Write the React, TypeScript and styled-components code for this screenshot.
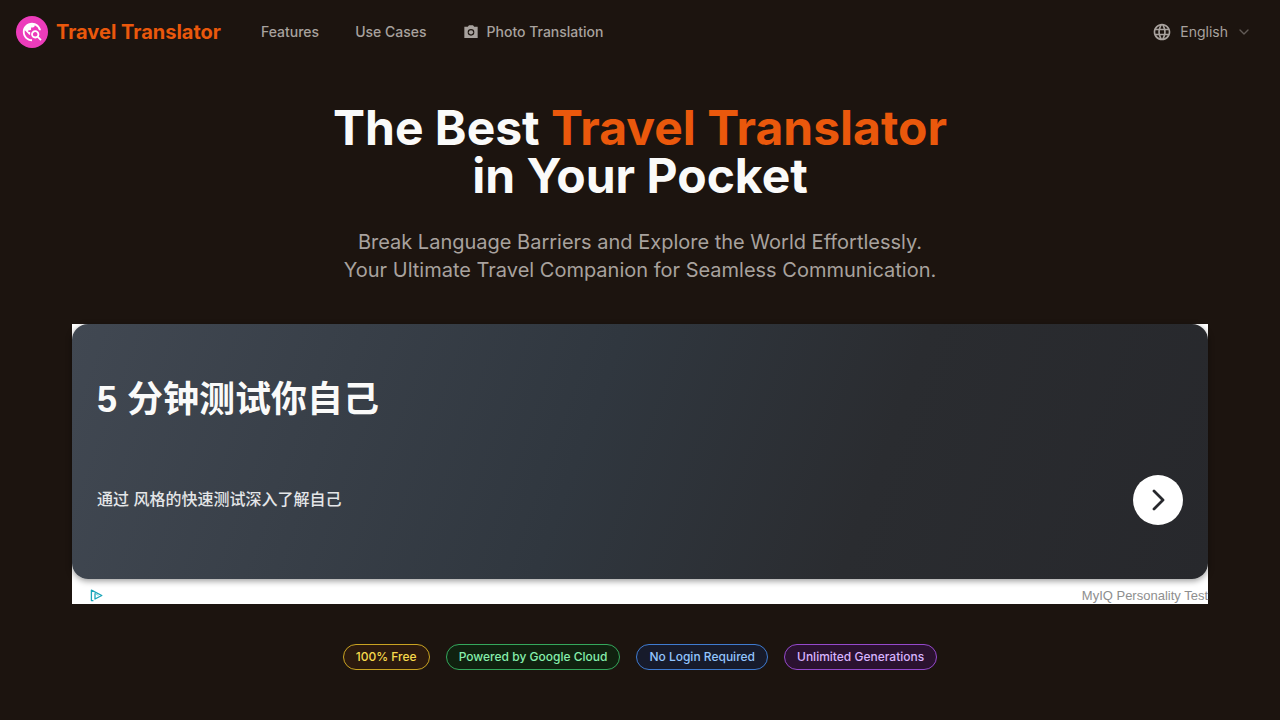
import React from "react";
import styled, { createGlobalStyle } from "styled-components";
import { MdTravelExplore, MdLanguage } from "react-icons/md";
import { ChevronDown } from "lucide-react";

const GlobalStyle = createGlobalStyle`
  *, *::before, *::after { box-sizing: border-box; }
  body {
    margin: 0;
    background: #1c140f;
    color: #fafaf9;
    font-family: Inter, "Noto Sans CJK SC", sans-serif;
  }
  h1, h2, p, ul { margin: 0; padding: 0; }
`;

const Header = styled.header`
  display: flex;
  align-items: center;
  justify-content: space-between;
  height: 64px;
  padding: 0 16px;
`;

const HeaderGroup = styled.div`
  display: flex;
  align-items: center;
  gap: 24px;
`;

const Brand = styled.a`
  display: flex;
  align-items: center;
  gap: 8px;
  color: #ea580c;
  font-size: 20px;
  font-weight: 700;
  line-height: 28px;
  text-decoration: none;
`;

const BrandMark = styled.span`
  display: flex;
  align-items: center;
  justify-content: center;
  width: 32px;
  height: 32px;
  border-radius: 50%;
  background: #ec3cbb;
  color: #ffffff;
`;

const Nav = styled.nav`
  display: flex;
  align-items: center;
  gap: 4px;
`;

const NavLink = styled.a`
  display: flex;
  align-items: center;
  gap: 8px;
  padding: 8px 16px;
  color: #a8a29e;
  font-size: 14px;
  font-weight: 500;
  line-height: 20px;
  text-decoration: none;
`;

const LanguageButton = styled.button`
  display: flex;
  align-items: center;
  gap: 8px;
  padding: 8px 12px;
  border: 0;
  background: transparent;
  color: #a8a29e;
  font-family: inherit;
  font-size: 14px;
  line-height: 20px;
  cursor: pointer;

  svg:last-child { opacity: 0.5; }
`;

const Main = styled.main`
  display: flex;
  flex-direction: column;
  align-items: center;
  padding: 40px 72px;
`;

const Title = styled.h1`
  font-size: 48px;
  font-weight: 700;
  line-height: 48px;
  text-align: center;
`;

const Accent = styled.span`
  color: #ea580c;
`;

const Lead = styled.p`
  margin-top: 28px;
  color: #a8a29e;
  font-size: 20px;
  line-height: 28px;
  text-align: center;
`;

const Ad = styled.aside`
  width: 100%;
  margin-top: 40px;
  background: #ffffff;
`;

const AdCard = styled.div`
  display: flex;
  flex-direction: column;
  gap: 48px;
  padding: 48px 25px 54px;
  border-radius: 16px;
  background: linear-gradient(110deg, #414852 0%, #30373f 45%, #2a2c30 70%, #27282c 100%);
  box-shadow: 0 2px 6px rgba(0, 0, 0, 0.4);
`;

const AdTitle = styled.h2`
  font-family: "Liberation Sans", "Noto Sans CJK SC", sans-serif;
  font-size: 36px;
  font-weight: 700;
  line-height: 55px;
`;

const AdRow = styled.div`
  display: flex;
  align-items: center;
  justify-content: space-between;
`;

const AdText = styled.p`
  color: #e4e6e8;
  font-family: "Liberation Sans", "Noto Sans CJK SC", sans-serif;
  font-size: 16px;
  font-weight: 500;
  line-height: 24px;
`;

const AdButton = styled.button`
  display: flex;
  align-items: center;
  justify-content: center;
  width: 50px;
  height: 50px;
  padding: 0;
  border: 0;
  border-radius: 50%;
  background: #ffffff;
  color: #27282d;
  cursor: pointer;
`;

const AdFooter = styled.div`
  display: flex;
  align-items: center;
  justify-content: space-between;
  height: 25px;
  padding: 8px 0 0 18px;
  color: #8e8e8e;
  font-family: "Liberation Sans", Arial, sans-serif;
  font-size: 13px;
  line-height: 16px;
`;

const AdChoices = styled.a`
  display: flex;
  color: #18a5b8;
`;

const Badges = styled.ul`
  display: flex;
  flex-wrap: wrap;
  justify-content: center;
  gap: 16px;
  margin-top: 40px;
  list-style: none;
`;

const Badge = styled.li<{ $text: string; $line: string; $fill: string }>`
  padding: 4px 12px;
  border: 1px solid ${(p) => p.$line};
  border-radius: 13px;
  background: ${(p) => p.$fill};
  color: ${(p) => p.$text};
  font-size: 12px;
  font-weight: 500;
  line-height: 16px;
`;

const badges = [
  { label: "100% Free", text: "#f7d94c", line: "#c9a322", fill: "#2c1a0e" },
  { label: "Powered by Google Cloud", text: "#86efac", line: "#34a85c", fill: "#10210f" },
  { label: "No Login Required", text: "#93c5fd", line: "#3f7bd0", fill: "#171b2b" },
  { label: "Unlimited Generations", text: "#d8b4fe", line: "#9549cc", fill: "#2b1230" },
];

const CameraIcon = () => (
  <svg width="16" height="16" viewBox="0 0 24 24" fill="currentColor" aria-hidden="true">
    <path
      fillRule="evenodd"
      d="M22 4h-5.17L15 2H9L7.17 4H2v17h20V4zM12 17.5a5 5 0 1 1 0-10 5 5 0 0 1 0 10z"
    />
    <circle cx="12" cy="12.5" r="3.2" />
  </svg>
);

export default function App() {
  return (
    <>
      <GlobalStyle />
      <Header>
        <HeaderGroup>
          <Brand href="#">
            <BrandMark>
              <MdTravelExplore size={22} />
            </BrandMark>
            Travel Translator
          </Brand>
          <Nav>
            <NavLink href="#features">Features</NavLink>
            <NavLink href="#use-cases">Use Cases</NavLink>
            <NavLink href="#photo">
              <CameraIcon />
              Photo Translation
            </NavLink>
          </Nav>
        </HeaderGroup>
        <LanguageButton type="button">
          <MdLanguage size={20} />
          English
          <ChevronDown size={16} />
        </LanguageButton>
      </Header>
      <Main>
        <Title>
          The Best <Accent>Travel Translator</Accent>
          <br />
          in Your Pocket
        </Title>
        <Lead>
          Break Language Barriers and Explore the World Effortlessly.
          <br />
          Your Ultimate Travel Companion for Seamless Communication.
        </Lead>
        <Ad>
          <AdCard>
            <AdTitle>5 分钟测试你自己</AdTitle>
            <AdRow>
              <AdText>通过 风格的快速测试深入了解自己</AdText>
              <AdButton type="button" aria-label="Open">
                <svg width="24" height="24" viewBox="0 0 24 24" fill="none" stroke="currentColor" strokeWidth="2.8" strokeLinecap="round" strokeLinejoin="round">
                  <path d="M8 3 17 12 8 21" />
                </svg>
              </AdButton>
            </AdRow>
          </AdCard>
          <AdFooter>
            <AdChoices href="#ad" aria-label="AdChoices">
              <svg width="13" height="13" viewBox="0 0 13 13" fill="none" stroke="currentColor" strokeWidth="1.3" strokeLinejoin="round">
                <path d="M3.4 11.6H1.4V1.2L11.8 6.5 5 10V4.2" />
                <path d="M5 4.4 8.4 6.5" strokeWidth="0.6" />
              </svg>
            </AdChoices>
            <span>MyIQ Personality Test</span>
          </AdFooter>
        </Ad>
        <Badges>
          {badges.map((b) => (
            <Badge key={b.label} $text={b.text} $line={b.line} $fill={b.fill}>
              {b.label}
            </Badge>
          ))}
        </Badges>
      </Main>
    </>
  );
}
